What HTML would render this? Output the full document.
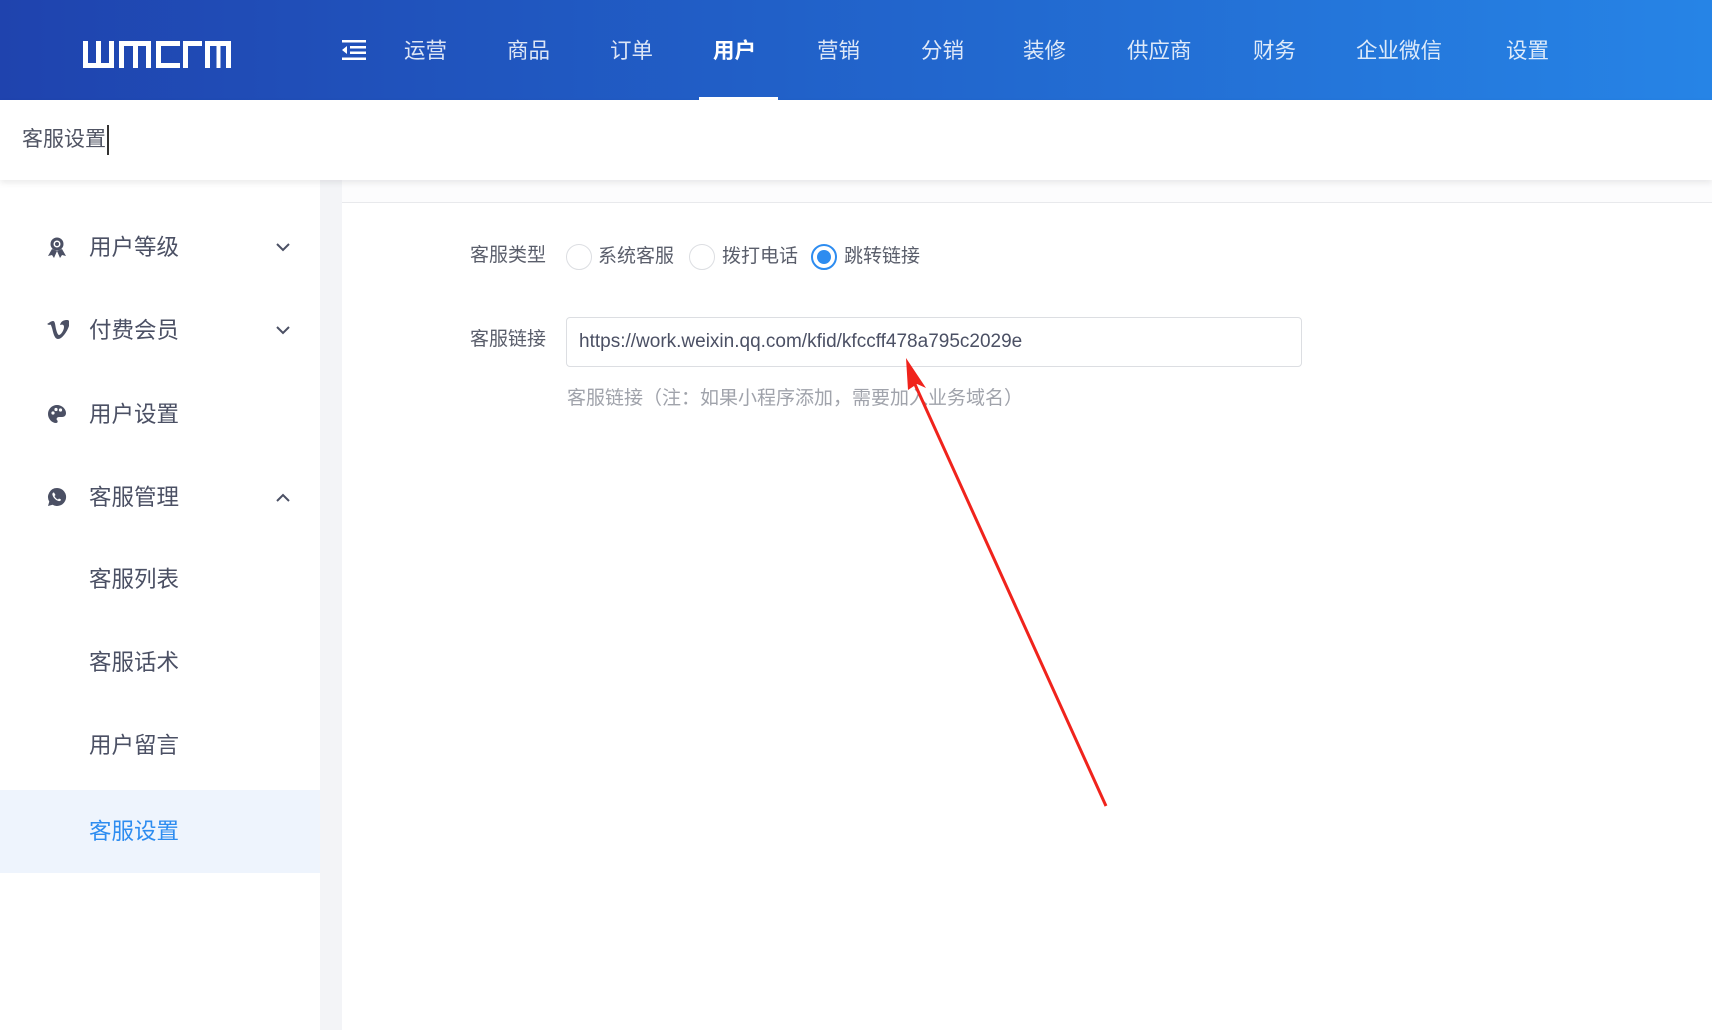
<!DOCTYPE html>
<html><head><meta charset="utf-8"><style>
*{margin:0;padding:0;box-sizing:border-box}
body{width:1712px;height:1030px;overflow:hidden;background:#fff;font-family:"Liberation Sans","Noto Sans CJK SC",sans-serif;position:relative}
.hdr{position:absolute;left:0;top:0;width:1712px;height:100px;background:linear-gradient(90deg,#1f43ae 0%,#2160c8 45%,#2684e6 100%)}
.nav{position:absolute;top:36px;color:rgba(255,255,255,.85);font-size:21.5px;line-height:30px}
.nav.a{color:#fff;font-weight:bold}
.ul{position:absolute;left:699px;top:97px;width:79px;height:3px;background:#fff}
.bc{position:absolute;left:0;top:100px;width:1712px;height:80px;background:#fff;box-shadow:0 3px 6px rgba(0,0,0,.08);z-index:2}
.bc span{position:absolute;left:22px;top:25px;font-size:21px;color:#505463;line-height:30px;border-right:2px solid #333;padding-right:1px}
.side{position:absolute;left:0;top:180px;width:320px;height:850px;background:#fff}
.gut{position:absolute;left:320px;top:180px;width:22px;height:850px;background:#f3f4f7}
.gtop{position:absolute;left:342px;top:180px;width:1370px;height:23px;background:#fcfcfd;border-bottom:1px solid #e8e9ec}
.it{position:absolute;left:0;width:320px;height:83px;font-size:22.5px;color:#4b5064;line-height:83px}
.it .t{position:absolute;left:89px}
.it svg.i{position:absolute;left:47px;top:31px}
.it .ch{position:absolute;left:276px;top:37px}
.it.act{background:#eef4fd;color:#2d8cf0}
.lbl{position:absolute;font-size:19px;color:#5a5e6b;line-height:26px}
.rd{position:absolute;width:26px;height:26px;border:1px solid #dcdee2;border-radius:50%;top:244px}
.rd.on{border:2px solid #2d8cf0}
.rd.on:after{content:"";position:absolute;left:4px;top:4px;width:14px;height:14px;border-radius:50%;background:#2d8cf0}
.inp{position:absolute;left:566px;top:317px;width:736px;height:50px;border:1px solid #dcdee2;border-radius:4px;font-size:19px;color:#4b5064;line-height:48px;padding-left:12px}
</style></head><body>
<div class="hdr">
<svg style="position:absolute;left:83px;top:41px" width="148" height="27" viewBox="0 0 148 27" fill="#fff">
<path d="M0 0h5v22h8V0h5v22h8V0h5v27H0z"/>
<path d="M36 0h32v27h-5V5h-8v22h-5V5h-9v22h-5z"/>
<path d="M73 0h24v5H78v17h19v5H73z"/>
<path d="M100 0h19v5h-14v22h-5z"/>
<path d="M122 0h26v27h-5V5h-5.5v22h-4V5h-6.5v22h-5z"/>
</svg>
<svg style="position:absolute;left:342px;top:40px" width="24" height="20" viewBox="0 0 24 20" fill="#fff"><rect x="0" y="0" width="24" height="2.5"/><rect x="8" y="6" width="16" height="2.5"/><rect x="8" y="11.5" width="16" height="2.5"/><rect x="0" y="17.5" width="24" height="2.5"/><path d="M0 10l5-4v8z"/></svg>
<div class="nav" style="left:404px">运营</div>
<div class="nav" style="left:507px">商品</div>
<div class="nav" style="left:610px">订单</div>
<div class="nav a" style="left:713px">用户</div>
<div class="nav" style="left:817px">营销</div>
<div class="nav" style="left:921px">分销</div>
<div class="nav" style="left:1023px">装修</div>
<div class="nav" style="left:1127px">供应商</div>
<div class="nav" style="left:1253px">财务</div>
<div class="nav" style="left:1356px">企业微信</div>
<div class="nav" style="left:1506px">设置</div>
<div class="ul"></div>
</div>
<div class="bc"><span>客服设置</span></div>
<div class="side">
<div class="it" style="top:26px"><svg class="i" width="20" height="22" viewBox="0 0 20 22" fill="#4b5064"><circle cx="10" cy="7" r="6.5"/><circle cx="10" cy="7" r="3.5" fill="#fff"/><circle cx="10" cy="7" r="2"/><path d="M5 12l-4 7 4-1 2 3 3-7zM15 12l4 7-4-1-2 3-3-7z"/></svg><span class="t">用户等级</span><svg class="ch" width="14" height="9" viewBox="0 0 14 9"><path d="M1 1l6 6 6-6" fill="none" stroke="#4b5064" stroke-width="2"/></svg></div>
<div class="it" style="top:109px"><svg class="i" width="22" height="20" viewBox="0 0 22 20" fill="#4b5064"><path d="M0 4c2-1 4-3 6-3 2 0 2 3 3 8 1 4 2 6 3 6 2 0 5-5 5-8 0-2-1-3-4-2 1-4 4-5 7-5 3 0 3 3 2 6-2 6-7 13-11 13-4 0-5-8-6-11-1-3-1-4-3-3z"/></svg><span class="t">付费会员</span><svg class="ch" width="14" height="9" viewBox="0 0 14 9"><path d="M1 1l6 6 6-6" fill="none" stroke="#4b5064" stroke-width="2"/></svg></div>
<div class="it" style="top:193px"><svg class="i" width="20" height="20" viewBox="0 0 20 20"><path d="M10 1C5 1 1 5 1 10s4 9 8 9c2 0 2-2 1-3s0-3 2-3h3c3 0 4-2 4-4 0-4-4-8-9-8z" fill="#4b5064"/><circle cx="6" cy="9" r="1.6" fill="#fff"/><circle cx="9" cy="5.5" r="1.6" fill="#fff"/><circle cx="13.5" cy="6" r="1.6" fill="#fff"/></svg><span class="t">用户设置</span></div>
<div class="it" style="top:276px"><svg class="i" width="20" height="20" viewBox="0 0 20 20"><path d="M10 1a9 9 0 0 0-7.7 13.6L1 19l4.6-1.2A9 9 0 1 0 10 1z" fill="#4b5064"/><path d="M7 5.5c-1 0-2 1-1.5 2.5 1 3 3 5 6 6 1.5.5 2.5-.5 2.5-1.5l-2-1-1 1c-1.5-.5-3-2-3.5-3.5l1-1z" fill="#fff"/></svg><span class="t">客服管理</span><svg class="ch" width="14" height="9" viewBox="0 0 14 9"><path d="M1 8l6-6 6 6" fill="none" stroke="#4b5064" stroke-width="2"/></svg></div>
<div class="it" style="top:358px"><span class="t">客服列表</span></div>
<div class="it" style="top:441px"><span class="t">客服话术</span></div>
<div class="it" style="top:524px"><span class="t">用户留言</span></div>
<div class="it act" style="top:610px"><span class="t">客服设置</span></div>
</div>
<div class="gut"></div>
<div class="gtop"></div>
<div class="lbl" style="left:470px;top:243px">客服类型</div>
<div class="rd" style="left:566px"></div><div class="lbl" style="left:598px;top:244px">系统客服</div>
<div class="rd" style="left:689px"></div><div class="lbl" style="left:722px;top:244px">拨打电话</div>
<div class="rd on" style="left:811px"></div><div class="lbl" style="left:844px;top:244px">跳转链接</div>
<div class="lbl" style="left:470px;top:327px">客服链接</div>
<div class="inp">https://work.weixin.qq.com/kfid/kfccff478a795c2029e</div>
<div class="lbl" style="left:567px;top:386px;color:#a0a3ab">客服链接（注：如果小程序添加，需要加入业务域名）</div>
<svg style="position:absolute;left:0;top:0" width="1712" height="1030"><line x1="1106" y1="806" x2="913" y2="380" stroke="#f0231c" stroke-width="3"/><path d="M906 358l20 30-9 -4-9 6z" fill="#f0231c"/></svg>
</body></html>
